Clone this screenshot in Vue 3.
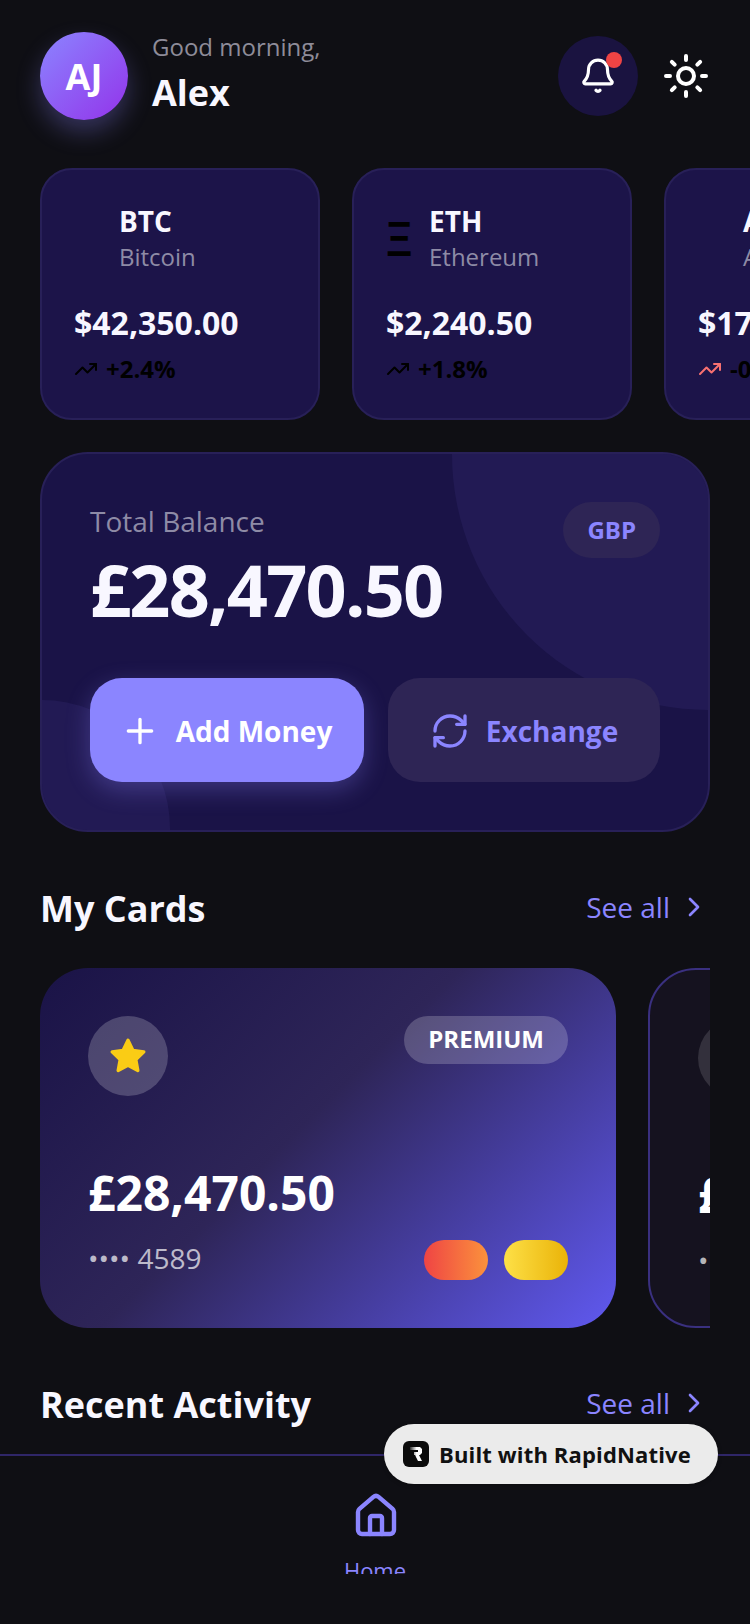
<template>
  <div class="screen">
    <header class="top-bar">
      <div class="avatar">AJ</div>
      <div class="greeting">
        <span class="hello">Good morning,</span>
        <span class="name">Alex</span>
      </div>
      <div class="top-actions">
        <button class="bell-btn">
          <svg width="38" height="38" viewBox="0 0 24 24" fill="none" stroke="#fff" stroke-width="2" stroke-linecap="round" stroke-linejoin="round">
            <path d="M3.26 15.33A1 1 0 0 0 4 17h16a1 1 0 0 0 .74-1.67C19.41 13.96 18 12.5 18 8A6 6 0 0 0 6 8c0 4.5-1.41 5.96-2.74 7.33" />
            <path d="M10.7 21a1.6 1.6 0 0 0 2.6 0" />
          </svg>
          <span class="bell-dot"></span>
        </button>
        <svg width="48" height="48" viewBox="0 0 24 24" fill="none" stroke="#fff" stroke-width="2" stroke-linecap="round" stroke-linejoin="round">
          <circle cx="12" cy="12" r="4" />
          <path d="M12 2v2M12 20v2M4.93 4.93l1.41 1.41M17.66 17.66l1.41 1.41M2 12h2M20 12h2M6.34 17.66l-1.41 1.41M19.07 4.93l-1.41 1.41" />
        </svg>
      </div>
    </header>

    <div class="ticker-row">
      <div v-for="coin in coins" :key="coin.symbol" class="ticker">
        <div class="ticker-head">
          <span class="coin-glyph">{{ coin.glyph }}</span>
          <div class="coin-names">
            <span class="coin-symbol">{{ coin.symbol }}</span>
            <span class="coin-name">{{ coin.name }}</span>
          </div>
        </div>
        <div class="coin-price">{{ coin.price }}</div>
        <div class="coin-change">
          <svg width="24" height="24" viewBox="0 0 24 24" fill="none" :stroke="coin.stroke" stroke-width="2" stroke-linecap="round" stroke-linejoin="round">
            <path d="M22 7l-8.5 8.5-5-5L2 17" />
            <path d="M16 7h6v6" />
          </svg>
          <span>{{ coin.change }}</span>
        </div>
      </div>
    </div>

    <section class="balance">
      <span class="blob blob-large"></span>
      <span class="blob blob-small"></span>
      <div class="balance-top">
        <div>
          <div class="balance-label">Total Balance</div>
          <div class="balance-amount">£28,470.50</div>
        </div>
        <span class="currency">GBP</span>
      </div>
      <div class="balance-actions">
        <button class="action action-primary">
          <svg width="40" height="40" viewBox="0 0 24 24" fill="none" stroke="#fff" stroke-width="2" stroke-linecap="round">
            <path d="M5 12h14M12 5v14" />
          </svg>
          Add Money
        </button>
        <button class="action action-secondary">
          <svg width="40" height="40" viewBox="0 0 24 24" fill="none" stroke="#8b85ff" stroke-width="2" stroke-linecap="round" stroke-linejoin="round">
            <path d="M3 12a9 9 0 0 1 9-9 9.75 9.75 0 0 1 6.74 2.74L21 8" />
            <path d="M21 3v5h-5" />
            <path d="M21 12a9 9 0 0 1-9 9 9.75 9.75 0 0 1-6.74-2.74L3 16" />
            <path d="M8 16H3v5" />
          </svg>
          Exchange
        </button>
      </div>
    </section>

    <div class="section-head cards-head">
      <h2>My Cards</h2>
      <a class="see-all">
        See all
        <svg width="32" height="32" viewBox="0 0 24 24" fill="none" stroke="#8b85ff" stroke-width="2" stroke-linecap="round" stroke-linejoin="round">
          <path d="M9 18l6-6-6-6" />
        </svg>
      </a>
    </div>

    <div class="card-row">
      <div class="pay-card pay-card-main">
        <div class="card-top">
          <span class="star-disc">
            <svg width="40" height="40" viewBox="0 0 24 24" fill="#facc15" stroke="#facc15" stroke-width="2" stroke-linejoin="round">
              <path d="M12 2.5l2.9 6.1 6.6.9-4.8 4.6 1.2 6.6L12 17.6l-5.9 3.1 1.2-6.6-4.8-4.6 6.6-.9z" />
            </svg>
          </span>
          <span class="tier">PREMIUM</span>
        </div>
        <div class="card-amount">£28,470.50</div>
        <div class="card-bottom">
          <span class="card-number">•••• 4589</span>
          <div class="chips">
            <span class="chip chip-red"></span>
            <span class="chip chip-yellow"></span>
          </div>
        </div>
      </div>
      <div class="pay-card pay-card-alt">
        <div class="card-top">
          <span class="star-disc star-disc-alt"></span>
        </div>
        <div class="card-amount">£12,300.00</div>
        <div class="card-bottom">
          <span class="card-number">•••• 7723</span>
        </div>
      </div>
    </div>

    <div class="section-head activity-head">
      <h2>Recent Activity</h2>
      <a class="see-all">
        See all
        <svg width="32" height="32" viewBox="0 0 24 24" fill="none" stroke="#8b85ff" stroke-width="2" stroke-linecap="round" stroke-linejoin="round">
          <path d="M9 18l6-6-6-6" />
        </svg>
      </a>
    </div>

    <nav class="tab-bar">
      <div class="tab">
        <svg class="tab-icon" width="48" height="48" viewBox="0 0 24 24" fill="none" stroke="#8b85ff" stroke-width="2.2" stroke-linecap="round" stroke-linejoin="round">
          <path d="M15 21v-8a1 1 0 0 0-1-1h-4a1 1 0 0 0-1 1v8" />
          <path d="M3 10a2 2 0 0 1 .71-1.53l7-6a2 2 0 0 1 2.58 0l7 6A2 2 0 0 1 21 10v9a2 2 0 0 1-2 2H5a2 2 0 0 1-2-2z" />
        </svg>
        <span class="tab-label">Home</span>
      </div>
    </nav>

    <div class="built-with">
      <span class="built-logo">
        <svg width="18" height="18" viewBox="0 0 18 18">
          <defs>
            <linearGradient id="logoFade" x1="0" y1="0" x2="1" y2="0">
              <stop offset="0" stop-color="#fff" stop-opacity="0.15" />
              <stop offset="0.55" stop-color="#fff" />
            </linearGradient>
          </defs>
          <path fill="url(#logoFade)" d="M3 2h10l2 2v4l-2 2h-1l3 6h-4L8 10H7V7h4V5H3z" />
        </svg>
      </span>
      Built with RapidNative
    </div>
  </div>
</template>

<script setup>
// Only ETH has a symbol glyph here; the other coins keep an empty slot of the same width
const coins = [
  { symbol: 'BTC', name: 'Bitcoin', glyph: '', price: '$42,350.00', change: '+2.4%', stroke: '#000' },
  { symbol: 'ETH', name: 'Ethereum', glyph: 'Ξ', price: '$2,240.50', change: '+1.8%', stroke: '#000' },
  { symbol: 'AVAX', name: 'Avalanche', glyph: '', price: '$175.20', change: '-0.5%', stroke: '#f87171' }
]
</script>

<style>
html,
body {
  margin: 0;
  background: #0f0f14;
}
</style>

<style scoped>
.screen {
  position: relative;
  width: 750px;
  height: 1624px;
  overflow: hidden;
  background: #0f0f14;
  font-family: "Open Sans", "Noto Sans", sans-serif;
  color: #f8f7ff;
}

button {
  border: none;
  font-family: inherit;
}

.top-bar {
  display: flex;
  align-items: center;
  height: 88px;
  padding: 32px 40px 0;
}

.avatar {
  width: 88px;
  height: 88px;
  border-radius: 50%;
  flex-shrink: 0;
  display: flex;
  align-items: center;
  justify-content: center;
  background: linear-gradient(135deg, #8b85ff, #9333ea);
  box-shadow: 0 12px 24px rgba(139, 133, 255, 0.3);
  color: #fff;
  font-size: 36px;
  font-weight: 700;
}

.greeting {
  display: flex;
  flex-direction: column;
  margin: 0 0 6px 24px;
}

.hello {
  font-size: 24px;
  line-height: 32px;
  color: #8e8c99;
}

.name {
  margin-top: 8px;
  font-size: 36px;
  line-height: 44px;
  font-weight: 700;
}

.top-actions {
  margin-left: auto;
  display: flex;
  align-items: center;
  gap: 24px;
}

.bell-btn {
  position: relative;
  width: 80px;
  height: 80px;
  border-radius: 50%;
  background: #1a1340;
  display: flex;
  align-items: center;
  justify-content: center;
  padding: 0;
}

.bell-dot {
  position: absolute;
  top: 16px;
  right: 16px;
  width: 16px;
  height: 16px;
  border-radius: 50%;
  background: #ef4444;
}

.ticker-row {
  display: flex;
  gap: 32px;
  margin-top: 48px;
  padding-left: 40px;
}

.ticker {
  flex: 0 0 280px;
  box-sizing: border-box;
  height: 252px;
  padding: 32px;
  border-radius: 32px;
  background: #1c1449;
  border: 2px solid #282058;
}

.ticker-head {
  display: flex;
  align-items: center;
  gap: 16px;
}

.coin-glyph {
  flex: 0 0 29px;
  font-size: 47px;
  line-height: 60px;
  font-weight: 600;
  color: #000;
}

.coin-glyph:not(:empty) {
  flex-basis: 27px;
}

.coin-names {
  display: flex;
  flex-direction: column;
}

.coin-symbol {
  font-size: 28px;
  line-height: 38px;
  font-weight: 700;
}

.coin-name {
  margin-top: 1px;
  font-size: 24px;
  line-height: 32px;
  color: #8e8ba6;
}

.coin-price {
  margin-top: 28px;
  font-size: 32px;
  line-height: 44px;
  font-weight: 700;
}

.coin-change {
  display: flex;
  align-items: center;
  gap: 8px;
  margin-top: 8px;
  font-size: 24px;
  line-height: 32px;
  font-weight: 700;
  color: #000;
}

.balance {
  position: relative;
  box-sizing: border-box;
  width: 670px;
  height: 380px;
  margin: 32px 0 0 40px;
  padding: 48px;
  border-radius: 48px;
  background: #1a1347;
  border: 2px solid #282058;
  overflow: hidden;
}

.blob {
  position: absolute;
  border-radius: 50%;
  background: rgba(139, 133, 255, 0.07);
}

.blob-large {
  width: 512px;
  height: 512px;
  top: -256px;
  right: -256px;
}

.blob-small {
  width: 256px;
  height: 256px;
  left: -128px;
  bottom: -126px;
}

.balance-top {
  position: relative;
  display: flex;
  justify-content: space-between;
  align-items: flex-start;
}

.balance-label {
  font-size: 28px;
  line-height: 38px;
  color: #8e8ba6;
}

.balance-amount {
  margin-top: 5px;
  font-size: 72px;
  line-height: 88px;
  font-weight: 700;
  letter-spacing: -1.8px;
}

.currency {
  padding: 0 24px;
  height: 56px;
  line-height: 56px;
  border-radius: 28px;
  background: #2e2555;
  color: #8b85ff;
  font-size: 24px;
  font-weight: 700;
}

.balance-actions {
  position: relative;
  display: flex;
  gap: 24px;
  margin-top: 45px;
}

.action {
  height: 104px;
  border-radius: 32px;
  display: flex;
  align-items: center;
  justify-content: center;
  gap: 16px;
  font-size: 28px;
  font-weight: 700;
  padding: 2px 0 0;
}

.action-primary {
  flex: 0 0 274px;
  padding-right: 2px;
  background: #8b85ff;
  color: #fff;
  box-shadow: 0 8px 24px rgba(139, 133, 255, 0.3);
}

.action-secondary {
  flex: 1;
  background: #2e2555;
  color: #8b85ff;
}

.section-head {
  display: flex;
  align-items: center;
  justify-content: space-between;
  padding: 0 40px;
}

.section-head h2 {
  margin: 0;
  font-size: 36px;
  line-height: 48px;
  font-weight: 700;
}

.cards-head {
  margin-top: 53px;
}

.activity-head {
  margin-top: 53px;
}

.see-all {
  display: flex;
  align-items: center;
  gap: 8px;
  margin-bottom: 4px;
  font-size: 28px;
  color: #8b85ff;
}

.card-row {
  display: flex;
  gap: 32px;
  width: 670px;
  margin: 35px 0 0 40px;
  overflow: hidden;
}

.pay-card {
  flex: 0 0 576px;
  box-sizing: border-box;
  height: 360px;
  padding: 48px;
  border-radius: 48px;
}

.pay-card-main {
  background: linear-gradient(135deg, #1a1347 0%, #2e2558 45%, #6059f0 100%);
}

.pay-card-alt {
  background: #15121f;
  border: 2px solid #3a3080;
}

.card-top {
  display: flex;
  justify-content: space-between;
  align-items: flex-start;
  height: 80px;
}

.star-disc {
  width: 80px;
  height: 80px;
  border-radius: 50%;
  display: flex;
  align-items: center;
  justify-content: center;
  background: rgba(255, 255, 255, 0.2);
}

.star-disc-alt {
  background: rgba(255, 255, 255, 0.13);
}

.tier {
  padding: 0 24px;
  height: 48px;
  line-height: 46px;
  border-radius: 24px;
  background: rgba(255, 255, 255, 0.2);
  color: #fff;
  font-size: 24px;
  font-weight: 700;
}

.card-amount {
  margin-top: 65px;
  font-size: 48px;
  line-height: 64px;
  font-weight: 700;
  color: #fff;
}

.card-bottom {
  display: flex;
  align-items: center;
  justify-content: space-between;
  margin-top: 14px;
}

.card-number {
  margin-bottom: 4px;
  font-size: 28px;
  color: rgba(255, 255, 255, 0.7);
}

.chips {
  display: flex;
  gap: 16px;
}

.chip {
  width: 64px;
  height: 40px;
  border-radius: 20px;
}

.chip-red {
  background: linear-gradient(90deg, #ef4444, #fb923c);
}

.chip-yellow {
  background: linear-gradient(90deg, #fde047, #eab308);
}

.tab-bar {
  position: absolute;
  left: 0;
  right: 0;
  top: 1454px;
  bottom: 0;
  background: #0f0f14;
  border-top: 2px solid #2f2668;
  display: flex;
  justify-content: center;
}

.tab {
  display: flex;
  flex-direction: column;
  align-items: center;
  height: 118px;
  padding-top: 36px;
  box-sizing: border-box;
  overflow: hidden;
}

.tab-icon,
.tab-label {
  flex-shrink: 0;
}

.tab-icon {
  margin-left: 2px;
}

.tab-label {
  margin-top: 15px;
  font-size: 22px;
  line-height: 30px;
  color: #8b85ff;
}

.built-with {
  position: absolute;
  left: 384px;
  top: 1424px;
  width: 334px;
  height: 60px;
  box-sizing: border-box;
  padding-left: 19px;
  border-radius: 30px;
  background: #ebebeb;
  box-shadow: 0 1px 4px rgba(0, 0, 0, 0.3);
  display: flex;
  align-items: center;
  gap: 10px;
  color: #111;
  font-size: 22px;
  letter-spacing: 0.15px;
  font-weight: 700;
}

.built-logo {
  width: 26px;
  height: 26px;
  border-radius: 6px;
  background: #0b0b0b;
  display: flex;
  align-items: center;
  justify-content: center;
}
</style>
